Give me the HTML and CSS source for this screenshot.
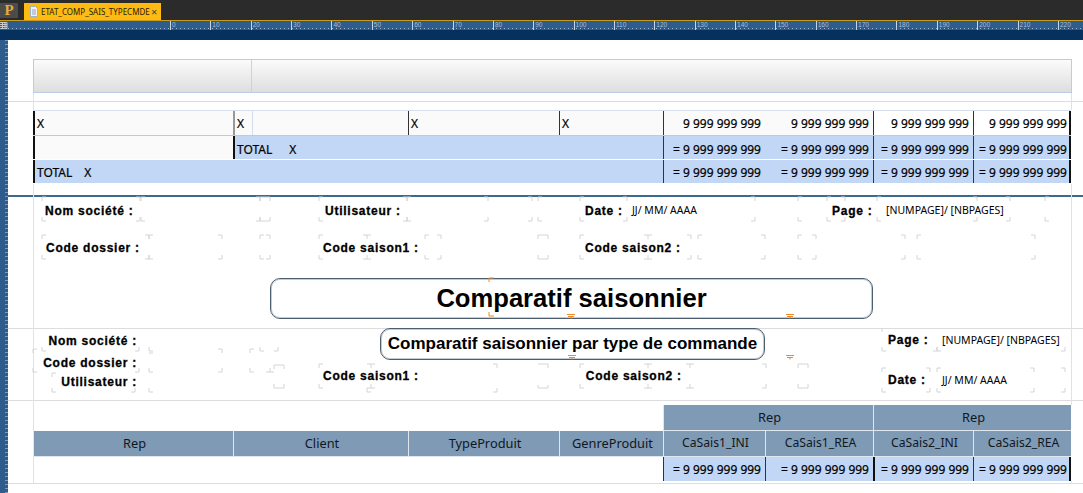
FILE: index.html
```html
<!DOCTYPE html>
<html lang="fr">

<head>
    <meta charset="utf-8">
    <title>ETAT_COMP_SAIS_TYPECMDE</title>
    <link rel="stylesheet" href="styles.css">
</head>

<body>
    <header class="tabbar">
        <div class="app-logo">P</div>
        <div class="doc-tab">
            <svg class="doc-icon" width="8" height="11" viewBox="0 0 8 11"><path d="M.5.5h5l2 2v8h-7z" fill="#eef3fa" stroke="#9fb2c9"/><path d="M2 4h4M2 6h4M2 8h4" stroke="#8fa3bb"/></svg>
            <span class="doc-name">ETAT_COMP_SAIS_TYPECMDE</span>
            <span class="doc-close">×</span>
        </div>
    </header>

    <div class="ruler-top">
        <svg class="ruler-corner" width="8" height="9" viewBox="0 0 8 9"><path d="M0 1.5h7v6H0M0 3.5h7M0 5.5h7M2.5 1.5v6M5 1.5v6" fill="none" stroke="#c9c9c9"/></svg>
        <div class="ruler-scale">
            <span>0</span><span>10</span><span>20</span><span>30</span><span>40</span><span>50</span><span>60</span><span>70</span><span>80</span><span>90</span><span>100</span><span>110</span><span>120</span><span>130</span><span>140</span><span>150</span><span>160</span><span>170</span><span>180</span><span>190</span><span>200</span><span>210</span><span>220</span>
        </div>
    </div>

    <div class="workspace">
        <div class="ruler-left"></div>

        <main class="canvas">
            <!-- field handles and guides, in page coordinates -->
            <svg class="marks" width="1075" height="453" viewBox="8 40 1075 453">
                <path class="guide" d="M33.5 93v17M33.5 184v248M33.5 457v26M1071.5 93v17M1071.5 184v221M1071.5 481v2"/>
                <path class="handle" d="M42 201v-4h4M136 197h4v4M140 217v4h-4M46 221h-4v-4
                    M141 201v-4h4M256 197h4v4M260 217v4h-4M145 221h-4v-4
                    M260 201v-4h10v4M270 217v4h-10v-4
                    M319 201v-4h4M403 197h4v4M407 217v4h-4M323 221h-4v-4
                    M407 201v-4h4M484 197h4v4M488 217v4h-4M411 221h-4v-4
                    M528 197h4v4M532 217v4h-4M538 201v-4h4M542 221h-4v-4
                    M580 201v-4h4M623 197h4v4M627 217v4h-4M584 221h-4v-4
                    M751 197h4v4M755 217v4h-4
                    M798 201v-4h4M802 221h-4v-4M827 201v-4h4M841 197h4v4M845 217v4h-4M831 221h-4v-4
                    M877 201v-4h4M973 197h4v4M977 217v4h-4M881 221h-4v-4
                    M1006 197h4v4M1010 217v4h-4M1045 201v-4h4M1049 221h-4v-4
                    M42 239v-4h4M145 235h4v4M149 255v4h-4M46 259h-4v-4
                    M149 239v-4h4M218 235h4v4M222 255v4h-4M153 259h-4v-4
                    M260 239v-4h4M264 259h-4v-4M266 235h4v4M270 255v4h-4
                    M319 239v-4h4M323 259h-4v-4M363 235h8M367 235v4M363 259h8M367 259v-4
                    M425 239v-4h4M429 259h-4v-4M437 235h4v4M441 255v4h-4
                    M538 239v-4h10v4M548 255v4h-10v-4
                    M580 239v-4h4M584 259h-4v-4M644 235h8M648 235v4M644 259h8M648 259v-4
                    M687 235h4v4M691 255v4h-4M698 239v-4h4M702 259h-4v-4
                    M761 235h4v4M765 255v4h-4M798 239v-4h4M802 259h-4v-4M812 235h4v4M816 255v4h-4
                    M901 235h4v4M905 255v4h-4M917 239v-4h4M921 259h-4v-4M1031 235h4v4M1035 255v4h-4
                    M42 347v4h4M135 351h4v-4M149 347v4h4M260 347v4h4M274 351h4v-4
                    M33 353v-4h4M33 368v4h4M135 372h4v-4M149 353h4M149 372v-4M149 372h4M218 349h4v4M222 368v4h-4
                    M250 353v-4h4M250 368v4h4M270 368v4h-4M270 372h4M274 369v-4h10v4M274 384v4h10v-4
                    M52 377v-4h4M56 392h-4v-4M135 388v4h-4M149 388v4h4
                    M319 368v-4h4M323 388h-4v-4M367 364h8M371 364v4M367 388h8M371 388v-4
                    M367 392v-4M367 392h4M493 364h4v4M497 388v4h-4
                    M538 364h10v4M538 385v3h10v-3
                    M580 368v-4h4M584 388h-4v-4M644 364h8M648 364v4M644 388h8M648 388v-4
                    M686 364h8M690 364v4M686 388h8M690 388v-4
                    M762 364h4v4M766 384v4h-4M798 368v-4h10v4M798 384v4h10v-4
                    M882 332v-4M882 347v4h4M933 351h4v-4M937 347v4h4M1061 351h4v-4
                    M882 372v-4h4M886 392h-4v-4M926 368h4v4M930 388v4h-4M937 372v-4h4M941 392h-4v-4
                    M1030 368h4v4M1034 388v4h-4M1061 368h4v4M1065 388v4h-4"/>
                <path class="anchor" d="M489 282v-4h5M489 312v4h5M567 314.5h8M568 316.5h6M571 316.5v2M786 314.5h8M787 316.5h6M790 316.5v2M568 355.5h8M569 357.5h6M572 357.5v2M786 355.5h8M787 357.5h6M790 357.5v2"/>
            </svg>

            <div class="band band-top"></div>

            <div class="table-head">
                <div class="head-first"></div>
                <div class="head-rest"></div>
            </div>

            <div class="band band-gap"></div>
            <div class="band band-gap2"></div>

            <div class="grid row-break">
                <div class="cell bar-heavy tint">X</div>
                <div class="cell bar-grey tint split">X</div>
                <div class="cell bar tint">X</div>
                <div class="cell bar tint">X</div>
                <div class="cell num bar tint">9 999 999 999</div>
                <div class="cell num tint">9 999 999 999</div>
                <div class="cell num bar">9 999 999 999</div>
                <div class="cell num bar end">9 999 999 999</div>
            </div>

            <div class="grid row-total row-total-first">
                <div class="cell bar-heavy tint"></div>
                <div class="cell blue bar-heavy span-3"><span class="total">TOTAL</span>X</div>
                <div class="cell blue num bar">= 9 999 999 999</div>
                <div class="cell blue num">= 9 999 999 999</div>
                <div class="cell blue num bar">= 9 999 999 999</div>
                <div class="cell blue num bar end">= 9 999 999 999</div>
            </div>

            <div class="grid row-total">
                <div class="cell blue bar-heavy span-4"><span class="total total-short">TOTAL</span>X</div>
                <div class="cell blue num bar">= 9 999 999 999</div>
                <div class="cell blue num">= 9 999 999 999</div>
                <div class="cell blue num bar">= 9 999 999 999</div>
                <div class="cell blue num bar end">= 9 999 999 999</div>
            </div>

            <div class="page-rule"></div>

            <section class="first-page">
                <div class="info-row info-one">
                    <span class="lbl">Nom société :</span>
                    <span class="lbl">Utilisateur :</span>
                    <span class="lbl">Date :</span>
                    <span class="val">JJ/ MM/ AAAA</span>
                    <span class="lbl">Page :</span>
                    <span class="val">[NUMPAGE]/ [NBPAGES]</span>
                </div>
                <div class="info-row info-two">
                    <span class="lbl">Code dossier :</span>
                    <span class="lbl">Code saison1 :</span>
                    <span class="lbl">Code saison2 :</span>
                </div>
                <h1 class="title-box">Comparatif saisonnier</h1>
            </section>

            <section class="next-page">
                <div class="next-left">
                    <span class="lbl">Nom société :</span>
                    <span class="lbl">Code dossier :</span>
                    <span class="lbl">Utilisateur :</span>
                </div>
                <div class="next-mid">
                    <h2 class="subtitle-box">Comparatif saisonnier par type de commande</h2>
                    <div class="next-codes">
                        <span class="lbl">Code saison1 :</span>
                        <span class="lbl">Code saison2 :</span>
                    </div>
                </div>
                <div class="next-right">
                    <div class="next-pair pair-page"><span class="lbl">Page :</span><span class="val">[NUMPAGE]/ [NBPAGES]</span></div>
                    <div class="next-pair pair-date"><span class="lbl">Date :</span><span class="val">JJ/ MM/ AAAA</span></div>
                </div>
            </section>

            <div class="grid row-group">
                <div class="group-hole"></div>
                <div class="cell head span-2">Rep</div>
                <div class="cell head span-2">Rep</div>
            </div>

            <div class="grid row-head">
                <div class="cell head">Rep</div>
                <div class="cell head">Client</div>
                <div class="cell head">TypeProduit</div>
                <div class="cell head">GenreProduit</div>
                <div class="cell head head-sm">CaSais1_INI</div>
                <div class="cell head head-sm">CaSais1_REA</div>
                <div class="cell head head-sm">CaSais2_INI</div>
                <div class="cell head head-sm">CaSais2_REA</div>
            </div>

            <div class="grid row-grand">
                <div class="group-hole"></div>
                <div class="cell blue num bar">= 9 999 999 999</div>
                <div class="cell blue num bar">= 9 999 999 999</div>
                <div class="cell blue num bar-heavy">= 9 999 999 999</div>
                <div class="cell blue num bar end">= 9 999 999 999</div>
            </div>

            <div class="last-rule"></div>
        </main>
    </div>
</body>

</html>
```

FILE: styles.css
```css
html,
body {
    height: 100%;
}

*,
*:before,
*:after {
    box-sizing: border-box;
}

body {
    background: #fff;
    color: #000;
    font-family: "Noto Sans", sans-serif;
    margin: 0;
    overflow: hidden;
}

/* tab strip */
.tabbar {
    align-items: flex-end;
    background: #2b2b2b;
    border-bottom: 1px solid #c79a1e;
    display: flex;
    gap: 6px;
    height: 21px;
}

.app-logo {
    align-self: flex-start;
    background: #4b4b4b;
    color: #e2ac3a;
    font-family: "Liberation Serif", serif;
    font-size: 15px;
    font-weight: bold;
    height: 15px;
    line-height: 15px;
    margin-top: 3px;
    text-align: center;
    width: 18px;
}

.doc-tab {
    align-items: center;
    background: #ffba12;
    display: flex;
    height: 17px;
    padding-left: 6px;
    width: 137px;
}

.doc-icon {
    flex: none;
    margin-right: 3px;
}

.doc-name {
    color: #26200a;
    font-size: 8px;
    white-space: nowrap;
    width: 109px;
}

.doc-close {
    color: #444;
    font-size: 11px;
    line-height: 1;
    margin-left: 1px;
}

/* rulers */
.ruler-top {
    background: linear-gradient(#2e5c8d 0, #2e5c8d 9px, #06315f 9px, #06315f 100%);
    height: 19px;
    position: relative;
}

.ruler-corner {
    display: block;
}

.ruler-scale {
    background: repeating-linear-gradient(90deg, #9fb6cf 0, #9fb6cf 1px, transparent 1px, transparent 4px) 0 7px / 100% 1px no-repeat;
    color: #a9bed6;
    display: flex;
    font-family: "Liberation Sans", sans-serif;
    font-size: 6.5px;
    height: 9px;
    left: 0;
    line-height: 7px;
    padding-left: 170px;
    position: absolute;
    top: 0;
    width: 100%;
}

.ruler-scale span {
    border-left: 1px solid #c6d5e6;
    flex: none;
    padding-left: 1px;
    width: 40.36px;
}

.workspace {
    display: flex;
    height: 453px;
}

.ruler-left {
    background:
        repeating-linear-gradient(#7d9cbd 0, #7d9cbd 1px, transparent 1px, transparent 4px) right / 3px 100% no-repeat,
        #2e5c8d;
    flex: none;
    width: 8px;
}

/* design surface */
.canvas {
    flex: 1;
    position: relative;
}

.marks {
    fill: none;
    left: 0;
    pointer-events: none;
    position: absolute;
    top: 0;
}

.guide {
    stroke: #e2e2e2;
}

.handle {
    stroke: #d4d4d4;
}

.anchor {
    stroke: #f08a24;
}

.band-top {
    height: 19px;
}

.table-head {
    background: linear-gradient(#fbfbfb, #dedede);
    border: 1px solid #b9cde4;
    display: flex;
    height: 34px;
    margin-left: 25px;
    width: 1039px;
}

.head-first {
    border-right: 1px solid #c4d3e5;
    width: 218px;
}

.band-gap {
    border-bottom: 1px solid #dddddd;
    height: 9px;
}

.band-gap2 {
    height: 8px;
}

.grid {
    display: grid;
    grid-template-columns: 200px 175px 151px 104px 102px 108px 100px 98px;
    margin-left: 25px;
    width: 1038px;
}

.row-break {
    border-bottom: 1px solid #c9c9c9;
    border-top: 1px solid #d6e0ec;
    height: 26px;
}

.row-total {
    height: 24px;
    padding-bottom: 1px;
}

.row-total .cell {
    padding-top: 2px;
}

.row-total-first .cell {
    padding-top: 3px;
}

.span-2 {
    grid-column: span 2;
}

.span-3 {
    grid-column: span 3;
}

.span-4 {
    grid-column: span 4;
}

.cell {
    -webkit-text-stroke: 0.2px #000;
    align-items: center;
    display: flex;
    font-size: 12px;
    min-width: 0;
    padding-left: 2px;
    white-space: nowrap;
}

.tint {
    background: #fafafa;
}

.split {
    background: linear-gradient(90deg, #fafafa 17px, #d5dfea 17px, #d5dfea 18px, #fafafa 18px);
}

.blue {
    background: #c1d7f5;
}

.num {
    justify-content: flex-end;
    padding-right: 4px;
}

.bar {
    border-left: 1px solid #333;
}

.bar-grey {
    border-left: 2px solid #999;
}

.bar-heavy {
    border-left: 2px solid #111;
}

.end {
    border-right: 2px solid #111;
    padding-right: 2px;
}

.total {
    margin-right: 17px;
}

.total-short {
    margin-right: 12px;
}

.page-rule {
    border-bottom: 2px solid #3c6b8e;
    height: 13px;
}

.lbl {
    -webkit-text-stroke: 0.3px #000;
    color: #000;
    font-family: "Liberation Sans", sans-serif;
    font-size: 12px;
    font-weight: bold;
    letter-spacing: 0.75px;
    white-space: nowrap;
}

.val {
    font-size: 10.5px;
    white-space: nowrap;
}

.first-page {
    border-bottom: 1px solid #dddddd;
    height: 132px;
}

.info-row {
    display: grid;
}

.info-one {
    align-items: start;
    grid-template-columns: 280px 260px 47px 200px 54px 1fr;
    height: 38px;
    padding: 7px 0 0 37px;
}

.info-one .val {
    line-height: 12px;
}

.info-two {
    grid-template-columns: 277px 262px 1fr;
    height: 43px;
    padding: 6px 0 0 38px;
}

.title-box {
    align-items: center;
    border: 1px solid #4d5e71;
    border-radius: 10px;
    box-shadow: inset 0 0 0 1px rgba(90, 105, 125, 0.35);
    display: flex;
    font-family: "Liberation Sans", sans-serif;
    font-size: 25.6px;
    font-weight: bold;
    height: 41px;
    justify-content: center;
    margin: 0 0 0 262px;
    padding-bottom: 1px;
    width: 603px;
}

.next-page {
    border-bottom: 1px solid #dddddd;
    display: flex;
    height: 72px;
}

.next-left {
    align-items: flex-end;
    display: flex;
    flex: none;
    flex-direction: column;
    padding-top: 5px;
    width: 129px;
}

.next-left .lbl {
    height: 19px;
    line-height: 14px;
}

.next-left .lbl:first-child {
    height: 22px;
}

.next-mid {
    flex: none;
    padding-left: 243px;
    width: 744px;
}

.subtitle-box {
    align-items: center;
    border: 1px solid #4d5e71;
    border-radius: 10px;
    box-shadow: inset 0 0 0 1px rgba(90, 105, 125, 0.35);
    display: flex;
    font-family: "Liberation Sans", sans-serif;
    font-size: 17px;
    font-weight: bold;
    height: 32px;
    justify-content: center;
    margin: -1px 0 0;
    white-space: nowrap;
    width: 385px;
}

.next-codes {
    display: flex;
    gap: 167px;
    margin: 9px 0 0 -57px;
}

.next-pair {
    display: flex;
    white-space: nowrap;
}

.next-pair .lbl {
    width: 54px;
}

.pair-page {
    margin-top: 4px;
}

.pair-date {
    margin-top: 26px;
}

.next-right {
    padding-left: 7px;
}

.row-group {
    height: 26px;
    margin-top: 4px;
}

.group-hole {
    grid-column: span 4;
}

.head {
    -webkit-text-stroke: 0;
    background: #7f9ab5;
    border-bottom: 1px solid #dfe6ee;
    border-left: 1px solid #dfe6ee;
    color: #10181f;
    font-size: 12.8px;
    justify-content: center;
    padding-bottom: 2px;
}

.head-sm {
    font-size: 12.2px;
}

.row-head {
    height: 26px;
}

.row-grand {
    height: 24px;
}

.last-rule {
    border-bottom: 1px solid #dddddd;
    height: 3px;
}
```
